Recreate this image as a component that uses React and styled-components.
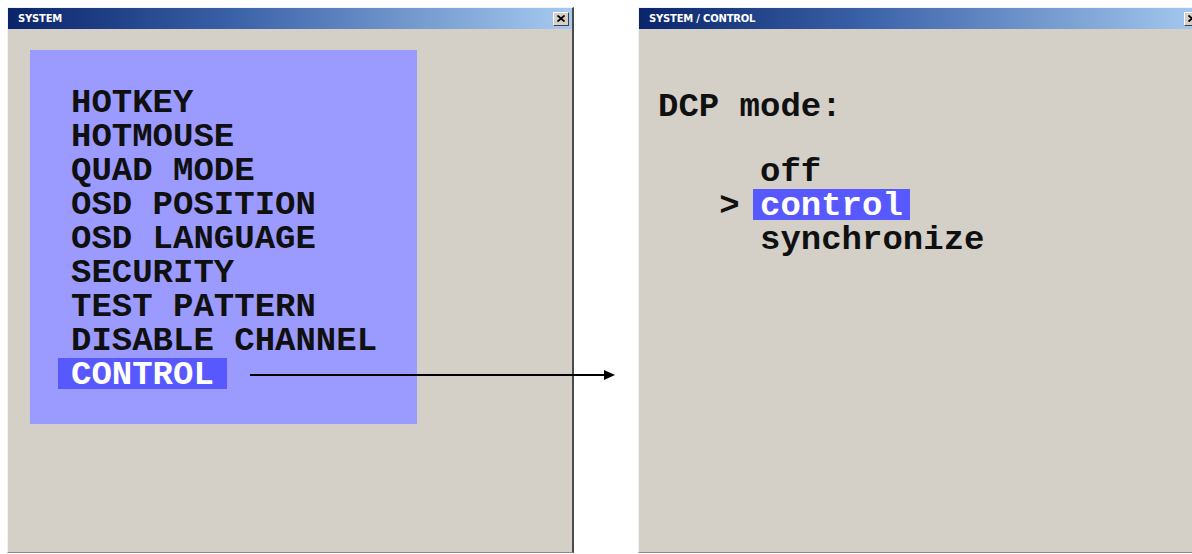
import React from 'react'
import styled, { createGlobalStyle } from 'styled-components';

const GlobalStyle = createGlobalStyle`
  html, body {
    margin: 0;
    padding: 0;
    background: #ffffff;
  }
  body {
    overflow: hidden;
  }
`;

const Page = styled.div`
  position: relative;
  display: flex;
  align-items: flex-start;
  gap: 64px;
  width: 1192px;
  height: 554px;
  padding: 7px 0 0 7px;
  box-sizing: border-box;
  overflow: hidden;
`;

const Window = styled.div`
  flex: none;
  display: flex;
  flex-direction: column;
  width: 567px;
  height: 546px;
  box-sizing: border-box;
  background: #d4d0c8;
  border-top: 1px solid #f4f3ef;
  border-left: 1px solid #f4f3ef;
  border-right: 2px solid #4a4a4a;
  border-bottom: 1px solid #8a8a8a;
`;

const TitleBar = styled.div`
  flex: none;
  display: flex;
  align-items: center;
  justify-content: space-between;
  height: 21px;
  padding: 0 3px 0 10px;
  background: linear-gradient(to right, #0a246a 0%, #3a62a8 40%, #a6caf0 100%);
`;

const TitleText = styled.span`
  font-family: "DejaVu Sans", Verdana, sans-serif;
  font-weight: bold;
  font-size: 10px;
  color: #ffffff;
  letter-spacing: -0.2px;
`;

const CloseButton = styled.div`
  width: 16px;
  height: 14px;
  box-sizing: border-box;
  display: flex;
  align-items: center;
  justify-content: center;
  background: #d4d0c8;
  border-top: 1px solid #ffffff;
  border-left: 1px solid #ffffff;
  border-right: 1px solid #404040;
  border-bottom: 1px solid #404040;
`;

const WindowBody = styled.div`
  flex: 1;
  padding: ${p => p.$pad};
`;

const OsdPanel = styled.div`
  width: 387px;
  height: 374px;
  box-sizing: border-box;
  padding: 36px 0 0 41px;
  background: #9b9bff;
`;

const OsdLine = styled.div`
  font-family: "Liberation Mono", "Courier New", monospace;
  font-weight: bold;
  font-size: 34px;
  line-height: 34px;
  height: 34px;
  color: #101010;
  white-space: pre;
`;

const Selected = styled.span`
  display: inline-block;
  height: 31px;
  line-height: 34px;
  vertical-align: top;
  margin-left: -${p => p.$pad}px;
  padding: 0 ${p => p.$pad}px;
  background: #5858ff;
  color: #ffffff;
`;

const OptionList = styled.div`
  margin-top: 31px;
  padding-left: 3ch;
  font-family: "Liberation Mono", "Courier New", monospace;
  font-size: 34px;
`;

const Marker = styled.span`
  display: inline-block;
  width: 2ch;
  vertical-align: top;
`;

const Arrow = styled.svg`
  position: absolute;
  left: 248px;
  top: 368px;
`;

const CloseIcon = () => (
  <svg width="8" height="7" viewBox="0 0 8 7">
    <path d="M0.5 0.5 L7.5 6.5 M7.5 0.5 L0.5 6.5" stroke="#000" strokeWidth="1.8" />
  </svg>
);

const menu = ["HOTKEY", "HOTMOUSE", "QUAD MODE", "OSD POSITION", "OSD LANGUAGE", "SECURITY", "TEST PATTERN", "DISABLE CHANNEL", "CONTROL"];
const modes = ["off", "control", "synchronize"];

const App = () => {
    const activeMenu = "CONTROL";
    const activeMode = "control";

    return (
        <Page>
            <GlobalStyle />
            <Window>
                <TitleBar>
                    <TitleText>SYSTEM</TitleText>
                    <CloseButton><CloseIcon /></CloseButton>
                </TitleBar>
                <WindowBody $pad="21px 0 0 22px">
                    <OsdPanel>
                        {menu.map(item => (
                            <OsdLine key={item}>
                                {item === activeMenu ? <Selected $pad={13}>{item}</Selected> : item}
                            </OsdLine>
                        ))}
                    </OsdPanel>
                </WindowBody>
            </Window>
            <Window>
                <TitleBar>
                    <TitleText>SYSTEM / CONTROL</TitleText>
                    <CloseButton><CloseIcon /></CloseButton>
                </TitleBar>
                <WindowBody $pad="61px 0 0 19px">
                    <OsdLine>DCP mode:</OsdLine>
                    <OptionList>
                        {modes.map(mode => (
                            <OsdLine key={mode}>
                                <Marker>{mode === activeMode ? ">" : ""}</Marker>
                                {mode === activeMode ? <Selected $pad={7}>{mode}</Selected> : mode}
                            </OsdLine>
                        ))}
                    </OptionList>
                </WindowBody>
            </Window>
            <Arrow width="370" height="14" viewBox="0 0 370 14">
                <line x1="2" y1="7" x2="358" y2="7" stroke="#000" strokeWidth="2" />
                <polygon points="356,2 367,7 356,12" fill="#000" />
            </Arrow>
        </Page>
    )
}

export default App
